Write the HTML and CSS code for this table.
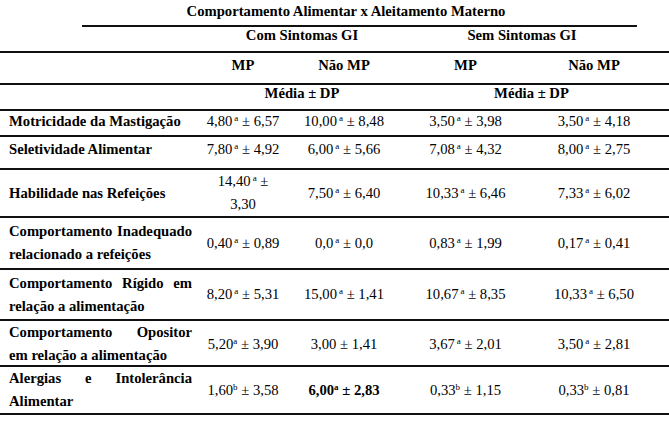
FILE: index.html
```html
<!DOCTYPE html>
<html lang="pt">
<head>
<meta charset="utf-8">
<title>Comportamento Alimentar x Aleitamento Materno</title>
<link rel="stylesheet" href="styles.css">
</head>
<body>
<div class="table">
  <div class="title">Comportamento Alimentar x Aleitamento Materno</div>

  <div class="row r-group">
    <div class="c"></div>
    <div class="c h span2 grp1">Com Sintomas GI</div>
    <div class="c h span2 grp2">Sem Sintomas GI</div>
  </div>

  <div class="row r-sub">
    <div class="c"></div>
    <div class="c h">MP</div>
    <div class="c h">Não MP</div>
    <div class="c h">MP</div>
    <div class="c h last">Não MP</div>
  </div>

  <div class="row r-stat">
    <div class="c"></div>
    <div class="c h span2 grp1">Média ± DP</div>
    <div class="c h span2 stat2">Média ± DP</div>
  </div>

  <div class="row r-one">
    <div class="c lbl">Motricidade da Mastigação</div>
    <div class="c d">4,80<sup class="s">a</sup> ± 6,57</div>
    <div class="c d">10,00<sup class="s">a</sup> ± 8,48</div>
    <div class="c d">3,50<sup class="s">a</sup> ± 3,98</div>
    <div class="c d last">3,50<sup class="s">a</sup> ± 4,18</div>
  </div>

  <div class="row r-sel">
    <div class="c lbl">Seletividade Alimentar</div>
    <div class="c d">7,80<sup class="s">a</sup> ± 4,92</div>
    <div class="c d">6,00<sup class="s">a</sup> ± 5,66</div>
    <div class="c d">7,08<sup class="s">a</sup> ± 4,32</div>
    <div class="c d last">8,00<sup class="s">a</sup> ± 2,75</div>
  </div>

  <div class="row r-hab tall">
    <div class="c lbl">Habilidade nas Refeições</div>
    <div class="c d">14,40<sup class="s">a</sup> ±<br>3,30</div>
    <div class="c d">7,50<sup class="s">a</sup> ± 6,40</div>
    <div class="c d">10,33<sup class="s">a</sup> ± 6,46</div>
    <div class="c d last">7,33<sup class="s">a</sup> ± 6,02</div>
  </div>

  <div class="row r-inad tall">
    <div class="c lbl">Comportamento Inadequado relacionado a refeições</div>
    <div class="c d">0,40<sup class="s">a</sup> ± 0,89</div>
    <div class="c d">0,0<sup class="s">a</sup> ± 0,0</div>
    <div class="c d">0,83<sup class="s">a</sup> ± 1,99</div>
    <div class="c d last">0,17<sup class="s">a</sup> ± 0,41</div>
  </div>

  <div class="row r-rig tall">
    <div class="c lbl">Comportamento Rígido em relação a alimentação</div>
    <div class="c d">8,20<sup class="s">a</sup> ± 5,31</div>
    <div class="c d">15,00<sup class="s">a</sup> ± 1,41</div>
    <div class="c d">10,67<sup class="s">a</sup> ± 8,35</div>
    <div class="c d last">10,33<sup class="s">a</sup> ± 6,50</div>
  </div>

  <div class="row r-opo tall">
    <div class="c lbl">Comportamento Opositor em relação a alimentação</div>
    <div class="c d">5,20<sup class="s tight">a</sup> ± 3,90</div>
    <div class="c d">3,00 ± 1,41</div>
    <div class="c d">3,67<sup class="s">a</sup> ± 2,01</div>
    <div class="c d last">3,50<sup class="s">a</sup> ± 2,81</div>
  </div>

  <div class="row r-ale tall">
    <div class="c lbl">Alergias e Intolerância Alimentar</div>
    <div class="c d">1,60<sup class="s tight">b</sup> ± 3,58</div>
    <div class="c d strong">6,00<sup class="s tight">a</sup> ± 2,83</div>
    <div class="c d">0,33<sup class="s tight">b</sup> ± 1,15</div>
    <div class="c d last">0,33<sup class="s tight">b</sup> ± 0,81</div>
  </div>
</div>
</body>
</html>
```

FILE: styles.css
```css
html, body {
  margin: 0;
  padding: 0;
  background: #ffffff;
}

body {
  font-family: "Liberation Serif", "Times New Roman", serif;
  font-size: 14.67px;
  color: #000000;
}

.table {
  width: 669px;
}

.title {
  box-sizing: border-box;
  height: 27px;
  margin-left: 82px;
  width: 555px;
  padding: 3px 27px 0 0;
  line-height: 16px;
  font-weight: bold;
  text-align: center;
  border-bottom: 2px solid #111111;
}

.row {
  box-sizing: border-box;
  display: grid;
  grid-template-columns: 196px 94px 108px 135px 136px;
  align-items: center;
  border-bottom: 2px solid #111111;
  line-height: 16px;
}

.r-group { height: 26px; padding-bottom: 8px; }
.r-sub   { height: 32px; padding-bottom: 6px; }
.r-stat  { height: 26px; padding-bottom: 8px; }
.r-one   { height: 26px; padding-bottom: 4px; }
.r-sel   { height: 33px; padding-bottom: 7px; }
.r-hab   { height: 48px; padding-bottom: 4px; }
.r-inad  { height: 52px; }
.r-rig   { height: 51px; }
.r-opo   { height: 46px; }
.r-ale   { height: 48px; }

.tall { line-height: 23px; }

.c {
  text-align: center;
}

.h {
  font-weight: bold;
}

.span2 {
  grid-column: span 2;
}

.grp1 { padding-left: 10px; }
.grp2 { padding-right: 23px; }
.stat2 { padding-right: 4px; }

.last { padding-right: 14px; }

.lbl {
  font-weight: bold;
  text-align: justify;
  padding-left: 9px;
  padding-right: 4px;
}

.strong {
  font-weight: bold;
}

.s {
  font-size: 9px;
  line-height: 0;
  vertical-align: 5px;
  margin-left: 2px;
}

.s.tight {
  margin-left: 0;
}
```
